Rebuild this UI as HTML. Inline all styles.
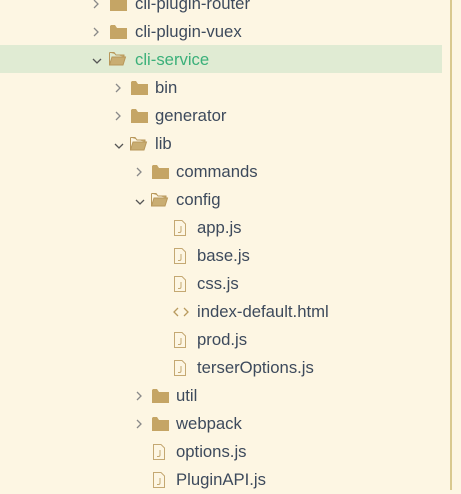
<!DOCTYPE html>
<html><head><meta charset="utf-8"><style>
body{margin:0;width:461px;height:490px;background:#fdf6e3;overflow:hidden;position:relative;font-family:"Liberation Sans","Noto Sans CJK SC",sans-serif;font-size:16.7px;color:#3d4a5c}
.r{position:absolute;left:0;height:28px;width:442px}
.t{position:absolute;top:3px;line-height:22px;white-space:nowrap}
svg{position:absolute}
.hl{background:#e0ebd3}
.vl{position:absolute;left:450px;top:0;width:2px;height:490px;background:#d9c98f}
</style></head><body>
<div class="vl"></div>
<svg width="0" height="0"><defs>
<g id="cr"><path d="M1 1 L5 5 L1 9" fill="none" stroke="#8a8a8a" stroke-width="1.3"/></g>
<g id="cd"><path d="M1 2 L5 6 L9 2" fill="none" stroke="#555" stroke-width="1.3"/></g>
<g id="fc"><path d="M0 2 L0 15 L17 15 L17 4 L7 4 L5 1 L1 1 Z" fill="#c5a565"/></g>
<g id="fo"><path d="M0.5 1.5 L5 1.5 L7 4 L15 4 L15 6 M0.5 1.5 L0.5 14 L14 14 L16.5 6 L3 6 L0.5 14" fill="#c9ad72" stroke="#b8975a" stroke-width="1"/></g>
<g id="fi"><path d="M0.5 0.5 L8 0.5 L11.5 4 L11.5 15.5 L0.5 15.5 Z" fill="none" stroke="#c4a872"/><path d="M7 6 L7 11 Q7 12.5 5.5 12.5 L4 12.5" fill="none" stroke="#c4a872"/></g>
</defs></svg>

<div class="r" style="top:-10px"><svg style="left:93px;top:9px" width="8" height="12"><use href="#cr"/></svg><svg style="left:110px;top:6px" width="18" height="16"><use href="#fc"/></svg><span class="t" style="left:135px">cli-plugin-router</span></div>
<div class="r" style="top:18px"><svg style="left:93px;top:9px" width="8" height="12"><use href="#cr"/></svg><svg style="left:110px;top:6px" width="18" height="16"><use href="#fc"/></svg><span class="t" style="left:135px">cli-plugin-vuex</span></div>
<div class="r hl" style="top:45px;height:28px"><svg style="left:92px;top:12px" width="11" height="9"><use href="#cd"/></svg><svg style="left:109px;top:6px" width="18" height="16"><use href="#fo"/></svg><span class="t" style="left:135px;color:#3bb07a;top:4px">cli-service</span></div>
<div class="r" style="top:74px"><svg style="left:115px;top:9px" width="8" height="12"><use href="#cr"/></svg><svg style="left:131px;top:6px" width="18" height="16"><use href="#fc"/></svg><span class="t" style="left:155px">bin</span></div>
<div class="r" style="top:102px"><svg style="left:115px;top:9px" width="8" height="12"><use href="#cr"/></svg><svg style="left:131px;top:6px" width="18" height="16"><use href="#fc"/></svg><span class="t" style="left:155px">generator</span></div>
<div class="r" style="top:130px"><svg style="left:114px;top:12px" width="11" height="9"><use href="#cd"/></svg><svg style="left:130px;top:6px" width="18" height="16"><use href="#fo"/></svg><span class="t" style="left:155px">lib</span></div>
<div class="r" style="top:158px"><svg style="left:136px;top:9px" width="8" height="12"><use href="#cr"/></svg><svg style="left:152px;top:6px" width="18" height="16"><use href="#fc"/></svg><span class="t" style="left:176px">commands</span></div>
<div class="r" style="top:186px"><svg style="left:135px;top:12px" width="11" height="9"><use href="#cd"/></svg><svg style="left:151px;top:6px" width="18" height="16"><use href="#fo"/></svg><span class="t" style="left:176px">config</span></div>
<div class="r" style="top:214px"><svg style="left:174px;top:6px" width="13" height="17"><use href="#fi"/></svg><span class="t" style="left:197px">app.js</span></div>
<div class="r" style="top:242px"><svg style="left:174px;top:6px" width="13" height="17"><use href="#fi"/></svg><span class="t" style="left:197px">base.js</span></div>
<div class="r" style="top:270px"><svg style="left:174px;top:6px" width="13" height="17"><use href="#fi"/></svg><span class="t" style="left:197px">css.js</span></div>
<div class="r" style="top:298px"><svg style="left:173px;top:9px" width="16" height="11"><path d="M5 1 L1 5 L5 9 M11 1 L15 5 L11 9" fill="none" stroke="#b89a5e" stroke-width="1.3"/></svg><span class="t" style="left:197px">index-default.html</span></div>
<div class="r" style="top:326px"><svg style="left:174px;top:6px" width="13" height="17"><use href="#fi"/></svg><span class="t" style="left:197px">prod.js</span></div>
<div class="r" style="top:354px"><svg style="left:174px;top:6px" width="13" height="17"><use href="#fi"/></svg><span class="t" style="left:197px">terserOptions.js</span></div>
<div class="r" style="top:382px"><svg style="left:136px;top:9px" width="8" height="12"><use href="#cr"/></svg><svg style="left:152px;top:6px" width="18" height="16"><use href="#fc"/></svg><span class="t" style="left:176px">util</span></div>
<div class="r" style="top:410px"><svg style="left:136px;top:9px" width="8" height="12"><use href="#cr"/></svg><svg style="left:152px;top:6px" width="18" height="16"><use href="#fc"/></svg><span class="t" style="left:176px">webpack</span></div>
<div class="r" style="top:438px"><svg style="left:153px;top:6px" width="13" height="17"><use href="#fi"/></svg><span class="t" style="left:176px">options.js</span></div>
<div class="r" style="top:466px"><svg style="left:153px;top:6px" width="13" height="17"><use href="#fi"/></svg><span class="t" style="left:176px">PluginAPI.js</span></div>
</body></html>
